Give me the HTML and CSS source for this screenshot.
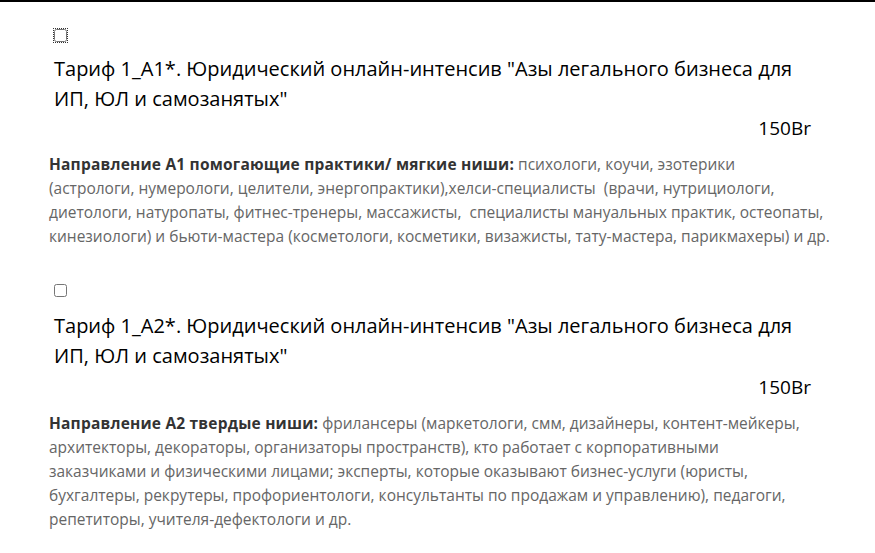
FILE: index.html
```html
<!DOCTYPE html>
<html lang="ru">
<head>
<meta charset="utf-8">
<link rel="stylesheet" href="styles.css">
</head>
<body>
<div class="page">
  <div class="tariff">
    <input type="checkbox" class="check focused">
    <div class="title">Тариф 1_А1*. Юридический онлайн-интенсив "Азы легального бизнеса для ИП, ЮЛ и самозанятых"</div>
    <div class="price">150Br</div>
    <p class="desc wide"><b>Направление А1 помогающие практики/ мягкие ниши:</b> психологи, коучи, эзотерики<br>(астрологи, нумерологи, целители, энергопрактики),хелси-специалисты&nbsp; (врачи, нутрициологи, диетологи, натуропаты, фитнес-тренеры, массажисты,&nbsp; специалисты мануальных практик, остеопаты, кинезиологи) и бьюти-мастера (косметологи, косметики, визажисты, тату-мастера, парикмахеры) и др.</p>
  </div>
  <div class="tariff">
    <input type="checkbox" class="check">
    <div class="title">Тариф 1_А2*. Юридический онлайн-интенсив "Азы легального бизнеса для ИП, ЮЛ и самозанятых"</div>
    <div class="price">150Br</div>
    <p class="desc"><b>Направление А2 твердые ниши:</b> фрилансеры (маркетологи, смм, дизайнеры, контент-мейкеры, архитекторы, декораторы, организаторы пространств), кто работает с корпоративными заказчиками и физическими лицами; эксперты, которые оказывают бизнес-услуги (юристы, бухгалтеры, рекрутеры, профориентологи, консультанты по продажам и управлению), педагоги, репетиторы, учителя-дефектологи и др.</p>
  </div>
</div>
</body>
</html>
```

FILE: styles.css
```css
html, body {
  margin: 0;
  padding: 0;
  background: #fff;
}
body {
  border-top: 2px solid #000;
  font-family: "Open Sans", "Liberation Sans", sans-serif;
}
.page {
  width: 764px;
  padding: 27px 0 0 49px;
}
.tariff {
  display: flex;
  flex-direction: column;
  margin-bottom: 36px;
}
.check {
  width: 13px;
  height: 13px;
  margin: 0 0 0 5px;
}
.check.focused {
  outline: 1px dotted #333;
}
.title {
  font-size: 20px;
  line-height: 30px;
  color: #000;
  margin-top: 12px;
  padding-left: 5px;
  padding-right: 2px;
}
.tariff + .tariff .title {
  margin-top: 14px;
}
.price {
  font-size: 19px;
  line-height: 28px;
  color: #000;
  text-align: right;
  margin-top: 0;
  padding-right: 2px;
}
.tariff + .tariff .price {
  margin-top: 2px;
}
.desc {
  font-size: 15.5px;
  line-height: 24px;
  color: #666;
  margin: 10px 0 0 0;
}
.tariff + .tariff .desc {
  margin-top: 10px;
}
.desc.wide {
  margin-right: -22px;
}
.desc b {
  color: #333;
  font-weight: 700;
  letter-spacing: 0.2px;
}
```
